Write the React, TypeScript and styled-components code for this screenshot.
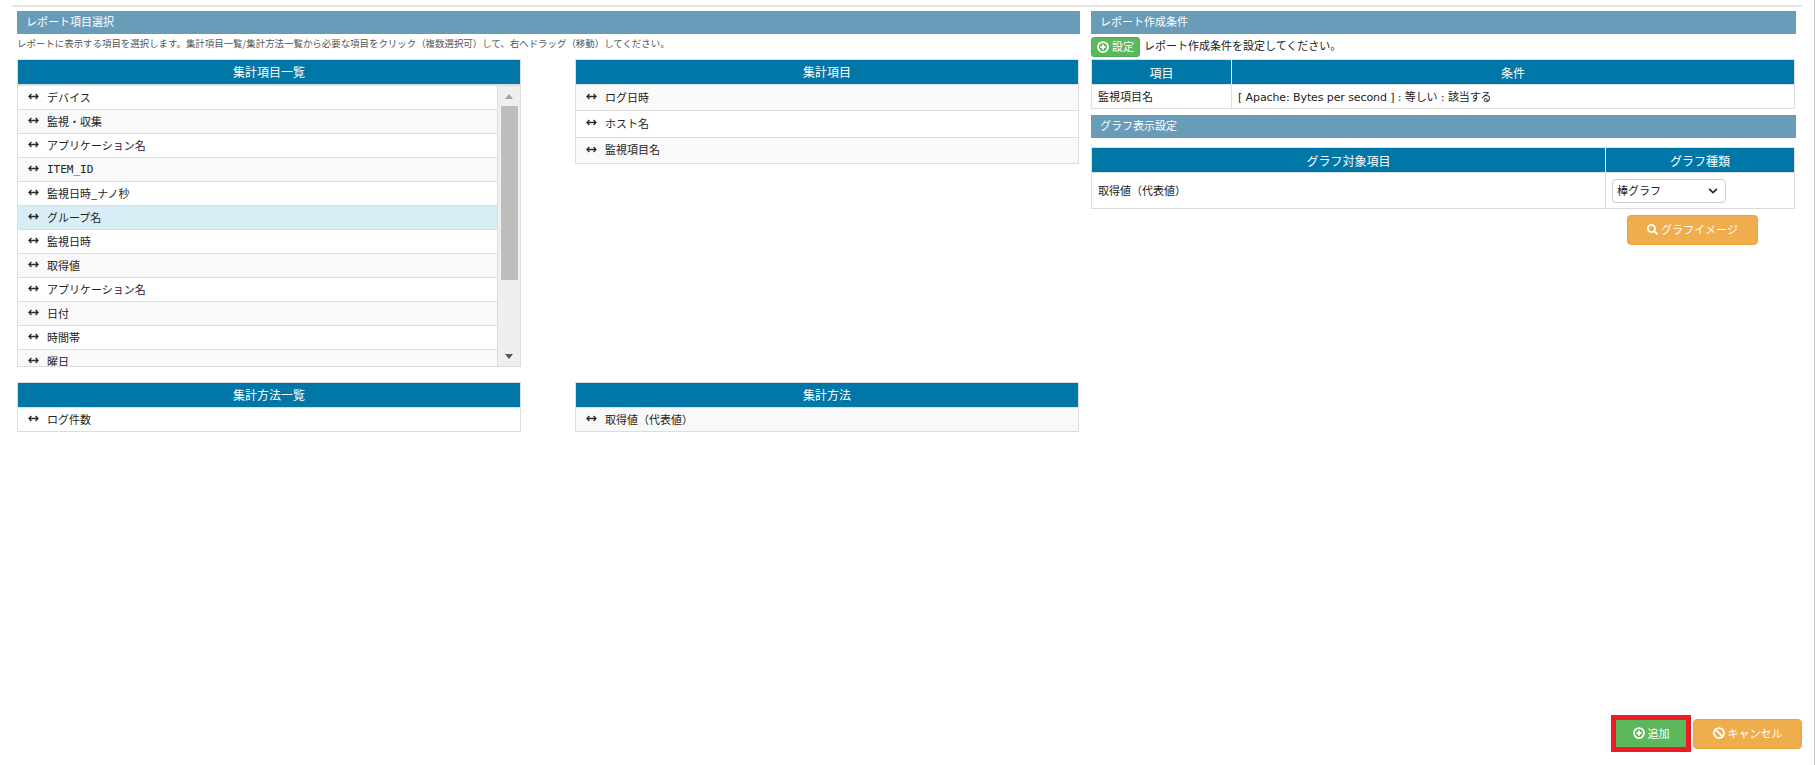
import React, { FC } from "react";
import styled, { createGlobalStyle } from "styled-components";
import { Ban, CirclePlus } from "lucide-react";
import { FaChevronDown, FaSearch } from "react-icons/fa";

const GlobalStyle = createGlobalStyle`
  html, body {
    margin: 0;
    padding: 0;
    background: #ffffff;
    overflow: hidden;
  }
  body {
    font-family: "Noto Sans CJK JP", "Noto Sans", sans-serif;
    font-size: 11px;
    color: #222222;
  }
`;

const Page = styled.div`
  box-sizing: border-box;
  width: 1815px;
  height: 765px;
  border-right: 1px solid #c8c8c8;
  display: flex;
  flex-direction: column;
`;

const TopRule = styled.div`
  height: 2px;
  margin: 5px 12px 0 12px;
  background: #e4e4e4;
`;

const Main = styled.div`
  display: grid;
  grid-template-columns: 1063px 705px;
  column-gap: 11px;
  padding: 4px 0 0 17px;
`;

const SectionBar = styled.div`
  height: 23px;
  line-height: 21px;
  padding-left: 9px;
  background: #689cb9;
  color: #ffffff;
  font-size: 11px;
`;

const Description = styled.div`
  height: 25px;
  line-height: 18px;
  font-size: 9.45px;
  color: #555555;
  white-space: nowrap;
`;

const TableGrid = styled.div`
  display: grid;
  grid-template-columns: 504px 504px;
  grid-template-rows: 308px auto;
  column-gap: 54px;
  row-gap: 15px;
  align-items: start;
`;

const Panel = styled.div<{ $fill?: boolean }>`
  box-sizing: border-box;
  border: 1px solid #dddddd;
  height: ${(p) => (p.$fill ? "100%" : "auto")};
  display: flex;
  flex-direction: column;
  overflow: hidden;
`;

const PanelHead = styled.div`
  flex: none;
  height: 24px;
  line-height: 24px;
  text-align: center;
  background: #0077a6;
  color: #ffffff;
  font-size: 12px;
`;

const ScrollArea = styled.div`
  flex: 1;
  min-height: 0;
  display: flex;
  border-top: 2px solid #dddddd;
`;

const ListColumn = styled.div`
  flex: 1;
  min-width: 0;
  overflow: hidden;
  border-right: 1px solid #dddddd;
`;

const Row = styled.div<{ $alt?: boolean; $selected?: boolean; $tall?: boolean }>`
  box-sizing: border-box;
  height: ${(p) => (p.$tall ? "26.3px" : "24px")};
  display: flex;
  align-items: center;
  gap: 8px;
  padding: 0 0 2px 10px;
  border-top: 1px solid #dddddd;
  background: ${(p) => (p.$selected ? "#d9edf7" : p.$alt ? "#f9f9f9" : "#ffffff")};
  font-size: 11px;
  color: #222222;
`;

const ListRow = styled(Row)`
  &:first-child {
    border-top: 0;
    height: 23px;
  }
`;

const MonoLabel = styled.span`
  font-family: "DejaVu Sans Mono", monospace;
  font-size: 11px;
  padding-top: 1px;
`;

const DragIcon = styled.svg`
  flex: none;
  width: 11px;
  height: 7px;
  color: #2b2b2b;
`;

const ScrollTrack = styled.div`
  flex: none;
  width: 22px;
  display: flex;
  flex-direction: column;
  align-items: center;
  background: #efefef;
`;

const ArrowBox = styled.div`
  flex: none;
  height: 20px;
  display: flex;
  align-items: center;
  justify-content: center;
`;

const Arrow = styled.div<{ $down?: boolean }>`
  width: 0;
  height: 0;
  border-left: 4.5px solid transparent;
  border-right: 4.5px solid transparent;
  ${(p) =>
    p.$down ? "border-top: 5px solid #555555;" : "border-bottom: 5px solid #a3a3a3;"}
`;

const ScrollThumb = styled.div`
  flex: none;
  width: 17px;
  height: 174px;
  background: #bdbdbd;
`;

const ScrollGap = styled.div`
  flex: 1;
`;

const ConditionBar = styled.div`
  height: 25px;
  display: flex;
  align-items: flex-start;
  gap: 4px;
  padding-top: 3px;
  box-sizing: border-box;
  line-height: 17px;
  font-size: 11px;
  white-space: nowrap;
`;

const SmallGreenButton = styled.button`
  box-sizing: border-box;
  width: 49px;
  height: 20px;
  padding: 0 0 1px;
  display: inline-flex;
  align-items: center;
  justify-content: center;
  gap: 3px;
  border: 1px solid #4cae4c;
  border-radius: 3px;
  background: #5cb85c;
  color: #ffffff;
  font: inherit;
  font-size: 11px;
`;

const DataTable = styled.table`
  box-sizing: border-box;
  width: 704px;
  margin-left: 0;
  border-collapse: collapse;
  table-layout: fixed;
  font-size: 11px;
`;

const Th = styled.th`
  height: 24px;
  padding: 0;
  border: 1px solid #dddddd;
  border-right-color: #ffffff;
  background: #0077a6;
  color: #ffffff;
  font-size: 12px;
  font-weight: 400;
  text-align: center;
  &:last-child {
    border-right-color: #dddddd;
  }
`;

const Td = styled.td`
  padding: 0 6px 2px;
  border: 1px solid #dddddd;
  color: #222222;
`;

const SelectCell = styled(Td)`
  padding-bottom: 0;
`;

const LatinText = styled.span`
  font-family: "DejaVu Sans", "Noto Sans CJK JP", sans-serif;
  font-size: 11px;
  letter-spacing: -0.1px;
`;

const ConditionRow = styled.tr`
  height: 24px;
`;

const GraphRow = styled.tr`
  height: 36px;
`;

const SecondBar = styled(SectionBar)`
  margin-top: 6px;
  margin-bottom: 9px;
`;

const SelectWrap = styled.div`
  position: relative;
  width: 114px;
`;

const GraphSelect = styled.select`
  display: block;
  box-sizing: border-box;
  width: 114px;
  height: 24px;
  padding: 0 4px 2px;
  appearance: none;
  border: 1px solid #cccccc;
  border-radius: 4px;
  background: #ffffff;
  color: #222222;
  font: inherit;
  font-size: 11px;
`;

const SelectChevron = styled.span`
  position: absolute;
  top: 7px;
  right: 8px;
  display: flex;
  color: #222222;
  pointer-events: none;
`;

const ImageButtonRow = styled.div`
  display: flex;
  justify-content: flex-end;
  padding: 6px 38px 0 0;
`;

const OrangeButton = styled.button<{ $wide?: boolean }>`
  box-sizing: border-box;
  width: ${(p) => (p.$wide ? "109px" : "131px")};
  height: 30px;
  padding: 0 0 2px;
  display: inline-flex;
  align-items: center;
  justify-content: center;
  gap: 3px;
  border: 1px solid #eea236;
  border-radius: 4px;
  background: #f0ad4e;
  color: #ffffff;
  font: inherit;
  font-size: 11px;
`;

const Footer = styled.div`
  margin-top: auto;
  display: flex;
  justify-content: flex-end;
  align-items: center;
  gap: 2px;
  padding: 0 12px 13px 0;
`;

const HighlightedGreenButton = styled.button`
  box-sizing: border-box;
  width: 80px;
  height: 37px;
  padding: 0 0 2px;
  display: inline-flex;
  align-items: center;
  justify-content: center;
  gap: 3px;
  border: 5px solid #ed1c24;
  background: #5cb85c;
  color: #ffffff;
  font: inherit;
  font-size: 11px;
`;

const Drag: FC = () => (
  <DragIcon viewBox="0 0 11 7" aria-hidden="true">
    <path
      d="M1 3.5h9M3.4 1 1 3.5 3.4 6M7.6 1 10 3.5 7.6 6"
      fill="none"
      stroke="currentColor"
      strokeWidth="1.3"
    />
  </DragIcon>
);

const sourceItems = [
  "デバイス",
  "監視・収集",
  "アプリケーション名",
  "ITEM_ID",
  "監視日時_ナノ秒",
  "グループ名",
  "監視日時",
  "取得値",
  "アプリケーション名",
  "日付",
  "時間帯",
  "曜日",
];

const pickedItems = ["ログ日時", "ホスト名", "監視項目名"];

export default function App() {
  return (
    <Page>
      <GlobalStyle />
      <TopRule />
      <Main>
        <div>
          <SectionBar>レポート項目選択</SectionBar>
          <Description>
            レポートに表示する項目を選択します。集計項目一覧/集計方法一覧から必要な項目をクリック（複数選択可）して、右へドラッグ（移動）してください。
          </Description>
          <TableGrid>
            <Panel $fill>
              <PanelHead>集計項目一覧</PanelHead>
              <ScrollArea>
                <ListColumn>
                  {sourceItems.map((item, i) => (
                    <ListRow key={i} $alt={i % 2 === 1} $selected={i === 5}>
                      <Drag />
                      {item === "ITEM_ID" ? <MonoLabel>{item}</MonoLabel> : item}
                    </ListRow>
                  ))}
                </ListColumn>
                <ScrollTrack>
                  <ArrowBox>
                    <Arrow />
                  </ArrowBox>
                  <ScrollThumb />
                  <ScrollGap />
                  <ArrowBox>
                    <Arrow $down />
                  </ArrowBox>
                </ScrollTrack>
              </ScrollArea>
            </Panel>
            <Panel>
              <PanelHead>集計項目</PanelHead>
              {pickedItems.map((item, i) => (
                <Row key={item} $tall $alt={i % 2 === 0}>
                  <Drag />
                  {item}
                </Row>
              ))}
            </Panel>
            <Panel>
              <PanelHead>集計方法一覧</PanelHead>
              <Row>
                <Drag />
                ログ件数
              </Row>
            </Panel>
            <Panel>
              <PanelHead>集計方法</PanelHead>
              <Row $alt>
                <Drag />
                取得値（代表値）
              </Row>
            </Panel>
          </TableGrid>
        </div>
        <div>
          <SectionBar>レポート作成条件</SectionBar>
          <ConditionBar>
            <SmallGreenButton>
              <CirclePlus size={12} strokeWidth={3.5} />
              設定
            </SmallGreenButton>
            レポート作成条件を設定してください。
          </ConditionBar>
          <DataTable>
            <colgroup>
              <col width="140" />
              <col />
            </colgroup>
            <thead>
              <tr>
                <Th>項目</Th>
                <Th>条件</Th>
              </tr>
            </thead>
            <tbody>
              <ConditionRow>
                <Td>監視項目名</Td>
                <Td>
                  <LatinText>[ Apache: Bytes per second ] : 等しい : 該当する</LatinText>
                </Td>
              </ConditionRow>
            </tbody>
          </DataTable>
          <SecondBar>グラフ表示設定</SecondBar>
          <DataTable>
            <colgroup>
              <col />
              <col width="189" />
            </colgroup>
            <thead>
              <tr>
                <Th>グラフ対象項目</Th>
                <Th>グラフ種類</Th>
              </tr>
            </thead>
            <tbody>
              <GraphRow>
                <Td>取得値（代表値）</Td>
                <SelectCell>
                  <SelectWrap>
                    <GraphSelect defaultValue="bar">
                      <option value="bar">棒グラフ</option>
                      <option value="line">折れ線グラフ</option>
                    </GraphSelect>
                    <SelectChevron>
                      <FaChevronDown size={10} />
                    </SelectChevron>
                  </SelectWrap>
                </SelectCell>
              </GraphRow>
            </tbody>
          </DataTable>
          <ImageButtonRow>
            <OrangeButton>
              <FaSearch size={11} />
              グラフイメージ
            </OrangeButton>
          </ImageButtonRow>
        </div>
      </Main>
      <Footer>
        <HighlightedGreenButton>
          <CirclePlus size={12} strokeWidth={3.5} />
          追加
        </HighlightedGreenButton>
        <OrangeButton $wide>
          <Ban size={12} strokeWidth={3.5} />
          キャンセル
        </OrangeButton>
      </Footer>
    </Page>
  );
}
